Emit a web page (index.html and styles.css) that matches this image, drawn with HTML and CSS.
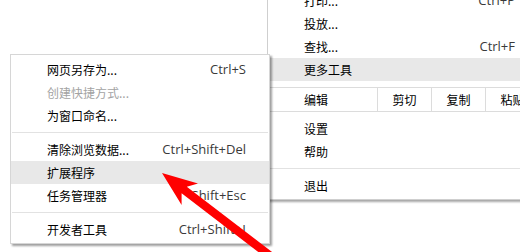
FILE: index.html
```html
<!DOCTYPE html>
<html lang="zh-CN">
<head>
    <meta charset="UTF-8">
    <title>更多工具</title>
    <link rel="stylesheet" href="styles.css">
</head>
<body>
    <div class="stage">
        <div class="main-clip">
            <div class="menu main-menu">
                <div class="item"><span class="label">打印...</span><span class="key">Ctrl+P</span></div>
                <div class="item"><span class="label">投放...</span></div>
                <div class="item"><span class="label">查找...</span><span class="key">Ctrl+F</span></div>
                <div class="item hover"><span class="label">更多工具</span></div>
                <div class="edit-row">
                    <span class="edit-label">编辑</span>
                    <span class="edit-cell">剪切</span>
                    <span class="edit-cell">复制</span>
                    <span class="edit-cell">粘贴</span>
                </div>
                <div class="item"><span class="label">设置</span></div>
                <div class="item"><span class="label">帮助</span></div>
                <div class="separator"></div>
                <div class="item"><span class="label">退出</span></div>
            </div>
        </div>

        <div class="menu sub-menu">
            <div class="item"><span class="label">网页另存为...</span><span class="key">Ctrl+S</span></div>
            <div class="item disabled"><span class="label">创建快捷方式...</span></div>
            <div class="item"><span class="label">为窗口命名...</span></div>
            <div class="separator"></div>
            <div class="item"><span class="label">清除浏览数据...</span><span class="key">Ctrl+Shift+Del</span></div>
            <div class="item hover"><span class="label">扩展程序</span></div>
            <div class="item"><span class="label">任务管理器</span><span class="key">Shift+Esc</span></div>
            <div class="separator"></div>
            <div class="item"><span class="label">开发者工具</span><span class="key">Ctrl+Shift+I</span></div>
        </div>

        <svg class="arrow" width="531" height="252" viewBox="0 0 531 252">
            <polygon points="162,173 198,183.6 186.8,186.7 323.4,291.3 318.2,297.9 181.6,193.3 181.6,205" fill="#ff0000"/>
        </svg>
    </div>
</body>
</html>
```

FILE: styles.css
```css
body {
    margin: 0;
    background-color: #fff;
    font-family: "Noto Sans CJK SC", sans-serif;
    color: #000;
}

.stage {
    position: relative;
    width: 531px;
    height: 252px;
    overflow: hidden;
}

.menu {
    background-color: #fff;
    border: 1px solid #cfcfcf;
    box-sizing: border-box;
}

/* the window menu, cut off by the screenshot at the right */
.main-clip {
    position: absolute;
    left: 267px;
    top: 0;
    width: 253px;
    height: 210px;
    overflow: hidden;
}

.main-menu {
    width: 273px;
    margin-top: -15px;
    padding: 3px 0 2px;
    box-shadow: 1px 2px 2px rgba(0, 0, 0, 0.35);
}

.sub-menu {
    position: absolute;
    left: 10px;
    top: 54px;
    width: 260px;
    padding: 3px 0 2px;
    border-color: #d6d6d6;
    box-shadow: 2px 2px 2px rgba(0, 0, 0, 0.38);
}

.item {
    display: flex;
    justify-content: space-between;
    align-items: center;
    height: 23px;
    padding: 0 24px 0 36px;
}

.sub-menu .item {
    padding-right: 23px;
}

.hover {
    background-color: #e8e8e8;
}

.label {
    font-size: 12px;
    line-height: 23px;
}

.disabled .label {
    color: #a3a3a3;
}

.key {
    font-family: "Open Sans", sans-serif;
    font-size: 13px;
    line-height: 23px;
    color: #3a3a3a;
}

.separator {
    height: 1px;
    margin: 5px 1px;
    background-color: #e2e2e2;
}

.edit-row {
    display: flex;
    height: 25px;
    margin: 6px 0 5px;
    border-top: 1px solid #dcdcdc;
    border-bottom: 1px solid #dcdcdc;
    box-sizing: border-box;
    font-size: 12px;
    line-height: 23px;
}

.edit-label {
    width: 109px;
    padding-left: 36px;
    box-sizing: border-box;
}

.edit-cell {
    width: 54px;
    border-left: 1px solid #dcdcdc;
    box-sizing: border-box;
    text-align: center;
}

.arrow {
    position: absolute;
    left: 0;
    top: 0;
}
```
